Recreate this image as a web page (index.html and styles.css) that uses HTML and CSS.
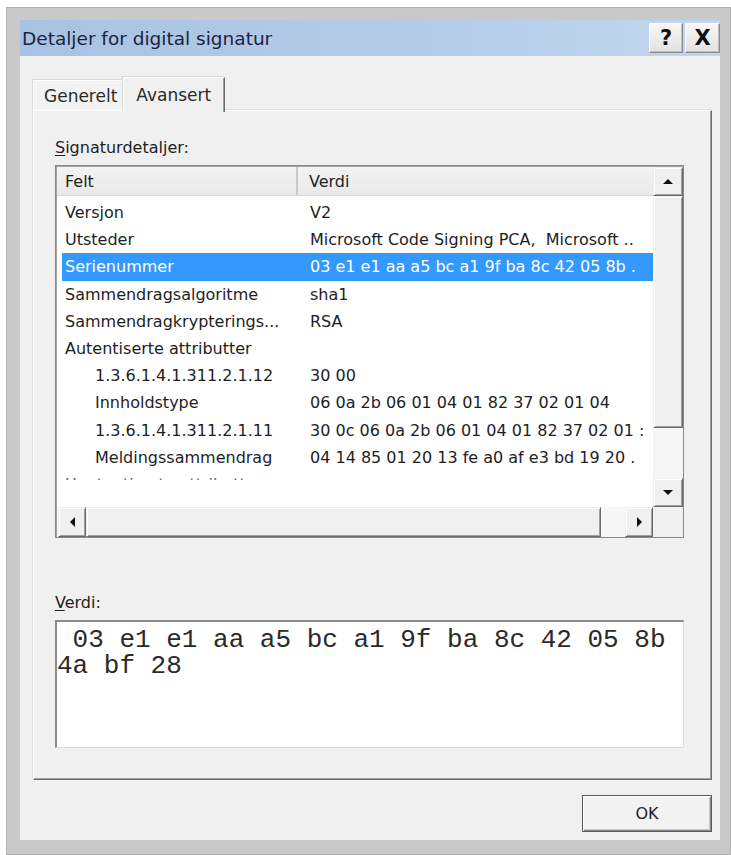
FILE: index.html
```html
<!DOCTYPE html>
<html lang="no">
<head>
<meta charset="utf-8">
<title>Detaljer for digital signatur</title>
<link rel="stylesheet" href="styles.css">
</head>
<body>
<div class="window">
  <div class="titlebar">
    <span class="title">Detaljer for digital signatur</span>
    <div class="caption-buttons">
      <button class="cap-btn">?</button>
      <button class="cap-btn">X</button>
    </div>
  </div>

  <div class="client">
    <div class="tabs">
      <div class="tab">Generelt</div>
      <div class="tab active">Avansert</div>
    </div>

    <div class="tabpage">
      <div class="field-label"><u>S</u>ignaturdetaljer:</div>

      <div class="listview">
        <div class="lv-main">
          <div class="lv-header">
            <div class="hcell hcell-field">Felt</div>
            <div class="hcell hcell-value">Verdi</div>
          </div>
          <div class="lv-rows">
            <div class="row"><span class="c1">Versjon</span><span class="c2">V2</span></div>
            <div class="row"><span class="c1">Utsteder</span><span class="c2">Microsoft Code Signing PCA,&nbsp; Microsoft ..</span></div>
            <div class="row selected"><span class="c1">Serienummer</span><span class="c2">03 e1 e1 aa a5 bc a1 9f ba 8c 42 05 8b .</span></div>
            <div class="row"><span class="c1">Sammendragsalgoritme</span><span class="c2">sha1</span></div>
            <div class="row"><span class="c1">Sammendragkrypterings...</span><span class="c2">RSA</span></div>
            <div class="row"><span class="c1">Autentiserte attributter</span><span class="c2"></span></div>
            <div class="row child"><span class="c1">1.3.6.1.4.1.311.2.1.12</span><span class="c2">30 00</span></div>
            <div class="row child"><span class="c1">Innholdstype</span><span class="c2">06 0a 2b 06 01 04 01 82 37 02 01 04</span></div>
            <div class="row child"><span class="c1">1.3.6.1.4.1.311.2.1.11</span><span class="c2">30 0c 06 0a 2b 06 01 04 01 82 37 02 01 :</span></div>
            <div class="row child"><span class="c1">Meldingssammendrag</span><span class="c2">04 14 85 01 20 13 fe a0 af e3 bd 19 20 .</span></div>
            <div class="row partial"><span class="c1">Uautentiserte attributter</span><span class="c2"></span></div>
          </div>
        </div>

        <div class="vscroll">
          <div class="sb-btn"><span class="arrow up"></span></div>
          <div class="sb-thumb v-thumb"></div>
          <div class="sb-track"></div>
          <div class="sb-btn"><span class="arrow down"></span></div>
        </div>

        <div class="hscroll">
          <div class="sb-btn"><span class="arrow left"></span></div>
          <div class="sb-thumb h-thumb"></div>
          <div class="sb-track"></div>
          <div class="sb-btn"><span class="arrow right"></span></div>
        </div>

        <div class="sb-corner"></div>
      </div>

      <div class="field-label value-label"><u>V</u>erdi:</div>
      <div class="valuebox"> 03 e1 e1 aa a5 bc a1 9f ba 8c 42 05 8b 4a bf 28</div>
    </div>

    <div class="footer">
      <button class="ok-btn">OK</button>
    </div>
  </div>
</div>
</body>
</html>
```
FILE: styles.css
```css
* {
  box-sizing: border-box;
}

body {
  margin: 0;
  background: #ffffff;
  font-family: "DejaVu Sans", "Noto Sans", sans-serif;
  font-size: 16px;
  color: #1c1c1c;
}

/* Window frame */
.window {
  margin: 7px 0 0 6px;
  width: 725px;
  height: 848px;
  background: #c9c9c9;
  border: 1px solid #b0b0b0;
  padding: 12px 10px 14px 13px;
  display: flex;
  flex-direction: column;
}

.titlebar {
  height: 36px;
  flex: none;
  display: flex;
  align-items: center;
  justify-content: space-between;
  padding-left: 2px;
  background: linear-gradient(to right, #a8c2e1, #b6cde8 60%, #c0d6ee);
}

.title {
  font-size: 18.5px;
  color: #1b2340;
}

.caption-buttons {
  display: flex;
  gap: 2px;
  align-self: flex-start;
  margin-top: 3px;
}

.cap-btn {
  width: 34px;
  height: 30px;
  padding: 0;
  font-family: "DejaVu Sans", sans-serif;
  font-weight: bold;
  font-size: 21px;
  line-height: 26px;
  color: #111;
  background: linear-gradient(#f7f7f7, #e2e2e2);
  border: 1px solid;
  border-color: #fdfdfd #8a8a8a #8a8a8a #fdfdfd;
  box-shadow: inset -1px -1px 0 #c0c0c0;
}

.cap-btn + .cap-btn {
  width: 35px;
}

/* Client area */
.client {
  flex: 1;
  background: #f0f0f0;
  padding: 21px 8px 0 13px;
  display: flex;
  flex-direction: column;
}

.tabs {
  height: 33px;
  flex: none;
  display: flex;
  align-items: flex-end;
  position: relative;
  z-index: 1;
  font-size: 17px;
}

.tab {
  height: 30px;
  padding: 0 6px 0 10px;
  display: flex;
  align-items: center;
  color: #2a2a2a;
  background: #f3f3f3;
  border-top: 1px solid #ffffff;
  border-left: 1px solid #ffffff;
  box-shadow: -1px -1px 0 #d6d6d6;
}

.tab.active {
  height: 35px;
  margin-bottom: -2px;
  padding: 0 13px 0 12px;
  background: #f0f0f0;
  border-right: 1px solid #696969;
  box-shadow: inset -1px 0 0 #a0a0a0, -1px -1px 0 #d6d6d6;
}

.tabpage {
  height: 670px;
  flex: none;
  border-top: 1px solid #ffffff;
  border-left: 1px solid #ffffff;
  border-right: 1px solid #696969;
  border-bottom: 1px solid #696969;
  box-shadow: inset -1px -1px 0 #a0a0a0, -1px -1px 0 #e0e0e0;
  padding: 27px 27px 0 21px;
  display: flex;
  flex-direction: column;
}

.field-label {
  height: 20px;
  line-height: 20px;
  color: #222;
}

.field-label u {
  text-decoration-thickness: 1px;
  text-underline-offset: 2px;
}

/* List view */
.listview {
  margin-top: 7px;
  height: 373px;
  border: 1px solid #8a8a8a;
  box-shadow: inset 1px 1px 0 #a3a3a3;
  padding: 1px 0 0 1px;
  background: #ffffff;
  display: grid;
  grid-template-columns: 1fr 30px;
  grid-template-rows: 1fr 30px;
}

.lv-main {
  overflow: hidden;
  background: #ffffff;
}

.lv-header {
  height: 29px;
  display: flex;
  background: linear-gradient(#f3f3f3, #e9e9e9);
  border-bottom: 1px solid #d8d8d8;
  color: #222;
}

.hcell {
  display: flex;
  align-items: center;
}

.hcell-field {
  width: 241px;
  padding-left: 8px;
  border-right: 2px solid #c8c8c8;
}

.hcell-value {
  flex: 1;
  padding-left: 11px;
}

.lv-rows {
  padding-top: 3px;
}

.row {
  height: 27.2px;
  margin-left: 5px;
  display: flex;
  align-items: center;
  white-space: nowrap;
  color: #1e1e1e;
}

.row .c1 {
  width: 236px;
  flex: none;
  padding-left: 3px;
  overflow: hidden;
}

.row .c2 {
  flex: 1;
  padding-left: 12px;
  overflow: hidden;
}

.row.child .c1 {
  padding-left: 33px;
}

.row.selected {
  background: #3399ff;
  color: #ffffff;
}

.row.partial .c1 {
  clip-path: inset(0 0 14px 0);
  color: #666;
}

/* Scroll bars */
.vscroll {
  display: flex;
  flex-direction: column;
  background: #f6f6f6;
}

.hscroll {
  display: flex;
  background: #f6f6f6;
  padding-left: 1px;
}

.sb-btn,
.sb-thumb {
  background: #f0f0f0;
  border-top: 1px solid #f0f0f0;
  border-left: 1px solid #f0f0f0;
  border-right: 1px solid #696969;
  border-bottom: 1px solid #696969;
  box-shadow: inset 1px 1px 0 #ffffff, inset -1px -1px 0 #a0a0a0;
  display: flex;
  align-items: center;
  justify-content: center;
}

.vscroll .sb-btn {
  height: 29px;
}

.v-thumb {
  height: 232px;
}

.vscroll .sb-track {
  flex: 1;
}

.hscroll .sb-btn {
  width: 28px;
}

.h-thumb {
  width: 515px;
}

.hscroll .sb-track {
  flex: 1;
}

.sb-corner {
  background: #f0f0f0;
}

.arrow {
  width: 0;
  height: 0;
  border: 0 solid transparent;
}

.arrow.up {
  border-width: 0 5px 5px;
  border-bottom-color: #111;
}

.arrow.down {
  border-width: 5px 5px 0;
  border-top-color: #111;
}

.arrow.left {
  border-width: 5px 5px 5px 0;
  border-right-color: #111;
}

.arrow.right {
  border-width: 5px 0 5px 5px;
  border-left-color: #111;
}

/* Value box */
.value-label {
  margin-top: 55px;
}

.valuebox {
  margin-top: 7px;
  height: 128px;
  background: #ffffff;
  border-top: 2px solid #8c8c8c;
  border-left: 2px solid #8c8c8c;
  border-right: 1px solid #dcdcdc;
  border-bottom: 1px solid #dcdcdc;
  padding: 5px 2px 0 0;
  font-family: "Liberation Mono", "DejaVu Sans Mono", monospace;
  font-size: 26px;
  line-height: 26px;
  white-space: pre-wrap;
  color: #2a2a2a;
}

/* Dialog buttons */
.footer {
  flex: 1;
  display: flex;
  justify-content: flex-end;
  align-items: flex-start;
  padding-top: 15px;
}

.ok-btn {
  width: 130px;
  height: 37px;
  font-family: "DejaVu Sans", sans-serif;
  font-size: 16px;
  color: #222;
  background: #f2f2f2;
  border: 1px solid #5a5a5a;
  box-shadow: inset 1px 1px 0 #ffffff, inset -1px -1px 0 #8a8a8a, inset -2px -2px 0 #c8c8c8;
}
```
